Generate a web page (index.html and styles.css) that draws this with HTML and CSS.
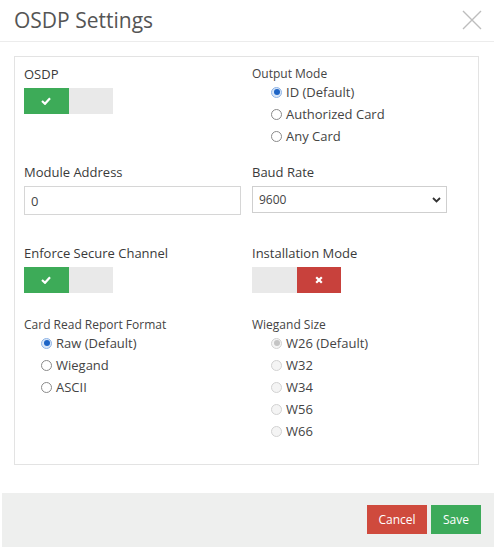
FILE: index.html
```html
<!DOCTYPE html>
<html lang="en">

<head>
	<meta charset="UTF-8">
	<meta name="viewport" content="width=device-width, initial-scale=1.0">
	<title>OSDP Settings</title>
	<link rel="stylesheet" href="styles.css">
</head>

<body>

	<div class="modal">
		<div class="modal-header">
			<h1 class="modal-title">OSDP Settings</h1>
			<button class="close-btn" type="button" aria-label="Close">
				<svg width="20" height="20" viewBox="0 0 20 20">
					<path d="M1 1 L19 19 M19 1 L1 19" stroke="#bdbdbd" stroke-width="1.4" fill="none" />
				</svg>
			</button>
		</div>

		<div class="modal-body">
			<div class="panel">

				<!-- OSDP / Output Mode -->
				<div class="form-row row-first">
					<div class="field">
						<div class="field-label">OSDP</div>
						<div class="toggle">
							<span class="toggle-half on-green">
								<svg width="10" height="8" viewBox="0 0 10 8">
									<path d="M1 4 L4 6.8 L9 1.2" stroke="#fff" stroke-width="2.2" fill="none" />
								</svg>
							</span>
							<span class="toggle-half off"></span>
						</div>
					</div>
					<div class="field">
						<div class="field-label small">Output Mode</div>
						<div class="radios">
							<label class="radio"><input type="radio" name="output" checked><span>ID (Default)</span></label>
							<label class="radio"><input type="radio" name="output"><span>Authorized Card</span></label>
							<label class="radio"><input type="radio" name="output"><span>Any Card</span></label>
						</div>
					</div>
				</div>

				<!-- Module Address / Baud Rate -->
				<div class="form-row row-second">
					<div class="field">
						<div class="field-label">Module Address</div>
						<input class="text-input" type="text" value="0">
					</div>
					<div class="field">
						<div class="field-label">Baud Rate</div>
						<div class="select-wrap">
							<select class="select-input">
								<option>9600</option>
								<option>19200</option>
								<option>38400</option>
								<option>115200</option>
							</select>
							<svg class="chevron" width="9" height="6" viewBox="0 0 9 6">
								<path d="M1 1 L4.5 4.5 L8 1" stroke="#333" stroke-width="1.8" fill="none" />
							</svg>
						</div>
					</div>
				</div>

				<!-- Secure channel / Installation mode -->
				<div class="form-row row-third">
					<div class="field">
						<div class="field-label">Enforce Secure Channel</div>
						<div class="toggle">
							<span class="toggle-half on-green">
								<svg width="10" height="8" viewBox="0 0 10 8">
									<path d="M1 4 L4 6.8 L9 1.2" stroke="#fff" stroke-width="2.2" fill="none" />
								</svg>
							</span>
							<span class="toggle-half off"></span>
						</div>
					</div>
					<div class="field">
						<div class="field-label">Installation Mode</div>
						<div class="toggle">
							<span class="toggle-half off"></span>
							<span class="toggle-half on-red">
								<svg width="8" height="8" viewBox="0 0 8 8">
									<path d="M1.2 1.2 L6.8 6.8 M6.8 1.2 L1.2 6.8" stroke="#fff" stroke-width="2.2" fill="none" />
								</svg>
							</span>
						</div>
					</div>
				</div>

				<!-- Card read format / Wiegand size -->
				<div class="form-row">
					<div class="field">
						<div class="field-label small">Card Read Report Format</div>
						<div class="radios narrow">
							<label class="radio"><input type="radio" name="format" checked><span>Raw (Default)</span></label>
							<label class="radio"><input type="radio" name="format"><span>Wiegand</span></label>
							<label class="radio"><input type="radio" name="format"><span>ASCII</span></label>
						</div>
					</div>
					<div class="field">
						<div class="field-label small">Wiegand Size</div>
						<div class="radios">
							<label class="radio"><input type="radio" name="wsize" checked disabled><span>W26 (Default)</span></label>
							<label class="radio"><input type="radio" name="wsize" disabled><span>W32</span></label>
							<label class="radio"><input type="radio" name="wsize" disabled><span>W34</span></label>
							<label class="radio"><input type="radio" name="wsize" disabled><span>W56</span></label>
							<label class="radio"><input type="radio" name="wsize" disabled><span>W66</span></label>
						</div>
					</div>
				</div>

			</div>
		</div>

		<div class="modal-footer">
			<button class="btn btn-cancel" type="button">Cancel</button>
			<button class="btn btn-save" type="button">Save</button>
		</div>
	</div>

</body>

</html>
```

FILE: styles.css
```css
body {
	margin: 0;
	background-color: #fff;
	font-family: 'Open Sans', 'Noto Sans', sans-serif;
	color: #444;
}

.modal {
	width: 494px;
	background-color: #fff;
}

.modal-header {
	display: flex;
	justify-content: space-between;
	align-items: center;
	height: 41px;
	padding: 0 12px 0 14px;
	border-bottom: 1px solid #ececec;
}

.modal-title {
	margin: 0;
	font-size: 21px;
	font-weight: 400;
	color: #555;
	line-height: 41px;
}

.close-btn {
	border: none;
	background: none;
	padding: 0;
	width: 20px;
	height: 20px;
	margin-top: -1px;
}

.close-btn svg {
	display: block;
}

.modal-body {
	padding: 14px 15px 28px 14px;
}

.panel {
	border: 1px solid #e3e3e3;
	padding: 9px 9px 22px 9px;
}

.form-row {
	display: grid;
	grid-template-columns: 217px 217px;
	column-gap: 11px;
}

.row-first {
	margin-bottom: 17px;
}

.row-second {
	margin-bottom: 30px;
}

.row-third {
	margin-bottom: 24px;
}

.field-label {
	font-size: 13px;
	font-weight: 500;
	line-height: 16px;
	color: #3a3a3a;
	margin-bottom: 6px;
}

.field-label.small {
	font-size: 12px;
	font-weight: 400;
	color: #444;
	margin-bottom: -1px;
}

/* on / off switch made of two halves */
.toggle {
	display: flex;
	width: 89px;
	height: 26px;
}

.toggle-half {
	flex: 1;
	display: flex;
	align-items: center;
	justify-content: center;
}

.toggle-half.on-green {
	background-color: #3dab58;
}

.toggle-half.on-red {
	background-color: #c8413c;
}

.toggle-half.off {
	background-color: #e9e9e9;
}

.radios {
	padding-left: 19px;
}

.radios.narrow {
	padding-left: 17px;
}

.radio {
	display: flex;
	align-items: center;
	height: 22px;
	font-size: 13px;
	color: #444;
}

.radio input {
	appearance: none;
	-webkit-appearance: none;
	width: 11px;
	height: 11px;
	margin: 0 4px 0 0;
	border: 1px solid #8a8a8a;
	border-radius: 50%;
	background-color: #fff;
	position: relative;
}

.radio input:checked {
	border-color: #8fb4e6;
	background-color: #d8e6f8;
}

.radio input:checked::after {
	content: "";
	position: absolute;
	left: 1.5px;
	top: 1.5px;
	width: 6px;
	height: 6px;
	border-radius: 50%;
	background-color: #1d64c6;
}

.radio input:disabled {
	border-color: #d2d2d2;
	background-color: #f4f4f4;
}

.radio input:disabled:checked::after {
	background-color: #c4c4c4;
}

.text-input {
	box-sizing: border-box;
	width: 217px;
	height: 29px;
	margin: 0;
	padding: 0 6px;
	border: 1px solid #d6d6d6;
	font-family: inherit;
	font-size: 13px;
	color: #444;
}

.select-wrap {
	position: relative;
	width: 195px;
}

.select-input {
	appearance: none;
	-webkit-appearance: none;
	box-sizing: border-box;
	width: 195px;
	height: 27px;
	margin: 0;
	padding: 0 6px;
	border: 1px solid #cfcfcf;
	border-radius: 0;
	background-color: #fff;
	font-family: inherit;
	font-size: 12px;
	color: #444;
}

.chevron {
	position: absolute;
	right: 6px;
	top: 11px;
}

.modal-footer {
	display: flex;
	justify-content: flex-end;
	gap: 4px;
	height: 54px;
	box-sizing: border-box;
	margin-left: 2px;
	padding: 12px 13px 0 0;
	background-color: #eeefee;
}

.btn {
	height: 29px;
	border: none;
	border-radius: 0;
	font-family: inherit;
	font-size: 12px;
	color: #fff;
	padding: 0;
}

.btn-cancel {
	width: 60px;
	background-color: #cf4a3d;
}

.btn-save {
	width: 50px;
	background-color: #3caa5a;
}
```
